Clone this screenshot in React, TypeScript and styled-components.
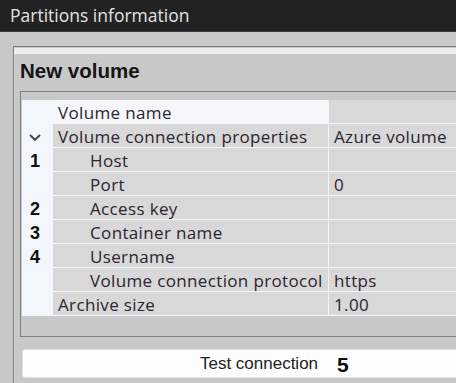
import React from "react";
import styled, { createGlobalStyle } from "styled-components";

const GlobalStyle = createGlobalStyle`
  html, body {
    margin: 0;
    padding: 0;
    background: #c8c8c8;
    overflow: hidden;
  }
  body {
    width: 456px;
    height: 383px;
  }
`;

const Window = styled.div`
  width: 456px;
  height: 383px;
  overflow: hidden;
  background: #c8c8c8;
  display: flex;
  flex-direction: column;
`;

const TitleBar = styled.div`
  height: 32px;
  flex: none;
  background: #222222;
  border-bottom: 1px solid #3a3a3a;
  box-sizing: border-box;
  color: #e2e2e2;
  font-family: "Open Sans", "Noto Sans", sans-serif;
  font-size: 17.5px;
  line-height: 31px;
  padding-left: 10px;
`;

const Content = styled.div`
  padding: 14px 0 0 13px;
  flex: 1;
  display: flex;
  flex-direction: column;
`;

const OuterPanel = styled.div`
  flex: 1;
  border-left: 1px solid #7e7e7e;
  border-top: 1px solid #7e7e7e;
  box-shadow: inset 1px 0 0 #d8d8d8;
  display: flex;
  flex-direction: column;
`;

const Highlight = styled.div`
  height: 6px;
  margin-top: 1px;
  background: #efefef;
`;

const Header = styled.div`
  height: 37px;
  box-sizing: border-box;
  padding: 4px 0 0 6px;
  font-family: "Liberation Sans", Arial, sans-serif;
  font-weight: bold;
  font-size: 20.5px;
  line-height: 26px;
  color: #141414;
`;

const InnerPanel = styled.div`
  margin-left: 6px;
  border-top: 1px solid #7e7e7e;
  border-left: 1px solid #7e7e7e;
  border-bottom: 1px solid #7e7e7e;
  padding: 8px 0 20px 1px;
`;

const Table = styled.div`
  display: grid;
  grid-template-columns: 31px 275px 1fr;
  grid-auto-rows: 23px;
  row-gap: 1px;
  background: #f5f7fb;
  padding-bottom: 1px;
  font-family: "Open Sans", "Noto Sans", sans-serif;
  font-size: 17px;
  letter-spacing: 0.35px;
  color: #2e2331;
`;

const Gutter = styled.div`
  background: #f3f6fb;
  display: flex;
  align-items: center;
  padding-left: 8px;
  padding-top: 3px;
  box-sizing: border-box;
  font-family: "Liberation Sans", Arial, sans-serif;
  font-weight: bold;
  font-size: 18px;
  letter-spacing: 0;
  color: #101010;
`;

const NameCell = styled.div<{ $indent: boolean; $light: boolean }>`
  background: ${(p) => (p.$light ? "#f5f7fb" : "#d8d8d8")};
  padding-left: ${(p) => (p.$indent ? "37px" : "5px")};
  display: flex;
  align-items: center;
  line-height: 23px;
  padding-top: 2px;
  box-sizing: border-box;
  white-space: nowrap;
  overflow: hidden;
`;

const ValueCell = styled.div`
  background: #d8d8d8;
  border-left: 1px solid #f4f4f4;
  padding-left: 5px;
  padding-top: 2px;
  box-sizing: border-box;
  display: flex;
  align-items: center;
  white-space: nowrap;
  overflow: hidden;
`;

const ButtonRow = styled.div`
  position: relative;
  margin: 12px 0 0 8px;
`;

const TestButton = styled.div`
  width: 474px;
  height: 29px;
  background: #fdfdfd;
  border-radius: 3px;
  border: 1px solid #e2e2e2;
  box-sizing: border-box;
  display: flex;
  align-items: center;
  justify-content: center;
  font-family: "Liberation Sans", Arial, sans-serif;
  font-size: 17px;
  color: #222;
`;

const Marker = styled.span`
  position: absolute;
  left: 315px;
  top: 3px;
  font-family: "Liberation Sans", Arial, sans-serif;
  font-weight: bold;
  font-size: 21px;
  line-height: 26px;
  color: #0c0c0c;
`;

const Chevron = () => (
  <svg width="14" height="9" viewBox="0 0 14 9" style={{ marginLeft: -2 }}>
    <path d="M2 2 L7 6.8 L12 2" fill="none" stroke="#4a4a4a" strokeWidth="2" />
  </svg>
);

type Row = {
  name: string;
  value?: string;
  indent?: boolean;
  mark?: string;
  chevron?: boolean;
  light?: boolean;
};

const rows: Row[] = [
  { name: "Volume name", light: true },
  { name: "Volume connection properties", value: "Azure volume", chevron: true },
  { name: "Host", indent: true, mark: "1" },
  { name: "Port", value: "0", indent: true },
  { name: "Access key", indent: true, mark: "2" },
  { name: "Container name", indent: true, mark: "3" },
  { name: "Username", indent: true, mark: "4" },
  { name: "Volume connection protocol", value: "https", indent: true },
  { name: "Archive size", value: "1.00" },
];

export default function App() {
  return (
    <>
      <GlobalStyle />
      <Window>
        <TitleBar>Partitions information</TitleBar>
        <Content>
          <OuterPanel>
            <Highlight />
            <Header>New volume</Header>
            <InnerPanel>
              <Table>
                {rows.map((r) => (
                  <React.Fragment key={r.name}>
                    <Gutter>{r.chevron ? <Chevron /> : r.mark}</Gutter>
                    <NameCell $indent={!!r.indent} $light={!!r.light}>
                      {r.name}
                    </NameCell>
                    <ValueCell>{r.value}</ValueCell>
                  </React.Fragment>
                ))}
              </Table>
            </InnerPanel>
            <ButtonRow>
              <TestButton>Test connection</TestButton>
              <Marker>5</Marker>
            </ButtonRow>
          </OuterPanel>
        </Content>
      </Window>
    </>
  );
}
